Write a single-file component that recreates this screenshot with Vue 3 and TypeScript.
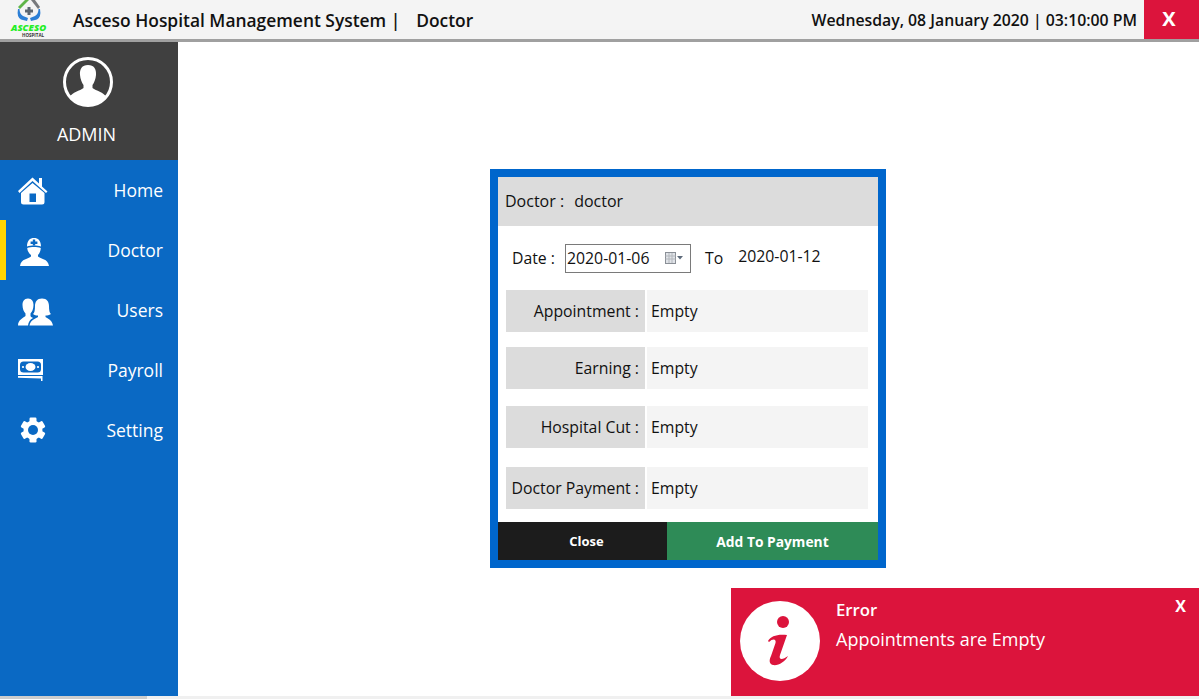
<script setup lang="ts">
interface NavItem { label: string; icon: string; active?: boolean }
const nav: NavItem[] = [
  { label: 'Home', icon: 'home' },
  { label: 'Doctor', icon: 'doctor', active: true },
  { label: 'Users', icon: 'users' },
  { label: 'Payroll', icon: 'payroll' },
  { label: 'Setting', icon: 'setting' },
]
const rows = [
  { label: 'Appointment :', cls: 'r1' },
  { label: 'Earning :', cls: 'r2' },
  { label: 'Hospital Cut :', cls: 'r3' },
  { label: 'Doctor Payment :', cls: 'r4' },
]
const gearAngles = [0, 60, 120, 180, 240, 300]
</script>

<template>
  <div class="page">
    <header class="topbar">
      <svg class="logo" width="42" height="24" viewBox="0 0 42 24">
        <path d="M10 7 L17 0 L21 0 L12 9 Z" fill="#5fb548" />
        <path d="M23 0 L27 0 L32 7 L30 9 Z" fill="#77797c" />
        <path d="M10 9 Q8.500 17 13 19.500 L19 21 L20 18 L15 16 Q11.500 14 11.500 9 Z" fill="#2c7fd6" />
        <path d="M32 9 Q33.500 17 29 19.500 L23 21 L22 18 L27 16 Q30.500 14 30.500 9 Z" fill="#2c7fd6" />
        <path d="M19.500 7 h3 v2.500 h2.500 v3 h-2.500 v2.500 h-3 v-2.500 h-2.500 v-3 h2.500 Z" fill="#5c6670" />
      </svg>
      <span class="logo-word">ASCESO</span>
      <span class="logo-sub">HOSPITAL</span>
      <div class="title">Asceso Hospital Management System |<span class="title-page">Doctor</span></div>
      <div class="clock">Wednesday, 08 January 2020 | 03:10:00 PM</div>
      <div class="close-app">X</div>
    </header>

    <div class="body">
      <aside class="sidebar">
        <div class="profile">
          <svg width="50" height="50" viewBox="0 0 50 50">
            <circle cx="25" cy="25" r="23.500" fill="none" stroke="#fff" stroke-width="3" />
            <path d="M25 8 C31 8 33.500 12 33 18 C32.700 22 31 26 29.500 28 L29.500 31 C33 34 41 35 43 40 C38 45 32 47.500 25 47.500 C18 47.500 12 45 7 40 C9 35 17 34 20.500 31 L20.500 28 C19 26 17.300 22 17 18 C16.500 12 19 8 25 8 Z" fill="#fff" />
          </svg>
          <div class="admin">ADMIN</div>
        </div>
        <nav class="nav">
          <div v-for="item in nav" :key="item.label" class="nav-item" :class="{ active: item.active }">
            <div class="nav-icon" :class="'ic-' + item.icon">
              <svg v-if="item.icon === 'home'" width="30" height="28" viewBox="0 0 30 28">
                <path d="M0 14 L14.500 0.500 L21 6.500 L21 1 L24 1 L24 9.500 L29.500 14.500 L28 16 L14.500 4 L1.500 16 Z" fill="#fff" />
                <path d="M3 16 L14.500 6 L26.500 16 L26.500 25 Q26.500 27.500 24 27.500 L5.500 27.500 Q3 27.500 3 25 Z M11.500 16.500 L11.500 25 L18 25 L18 16.500 Z" fill="#fff" fill-rule="evenodd" />
              </svg>
              <svg v-else-if="item.icon === 'doctor'" width="29" height="28" viewBox="0 0 29 28">
                <path d="M7 8.500 C7 2.500 10 0 14 0 C18 0 21 2.500 21 8.500 C17 7.300 11 7.300 7 8.500 Z M12.800 1.500 V3.600 H10.600 V6 H12.800 V7.800 H15.200 V6 H17.400 V3.600 H15.200 V1.500 Z" fill="#fff" fill-rule="evenodd" />
                <path d="M7.200 10 C11 8.800 17 8.800 20.800 10 C20.600 13 19.500 15.500 18 17 L18 18.500 C20.500 21 28 20.500 29 28 L0 28 C1 20.500 8.500 21 11 18.500 L11 17 C9 15.500 7.400 13 7.200 10 Z" fill="#fff" />
              </svg>
              <svg v-else-if="item.icon === 'users'" width="35" height="28" viewBox="0 0 35 28">
                <path d="M10 0.500 C14 0.500 15.500 3.500 15.500 7 C15.500 11 14 14 12.500 15.500 L12.500 18 C13 19 14 19.500 15 20 C12 21.500 10.500 24 10 27.500 L0 27.500 C0 22 5 20 7.500 18 L7.500 15.500 C6 14 4.500 11 4.500 7 C4.500 3.500 6 0.500 10 0.500 Z" fill="#fff" />
                <path d="M24 0.500 C29 0.500 31 4 31 8 C31 12 31.500 15 33 16 C31 17 29.500 17.500 27.500 17.500 L27.500 19 C29 20.500 34 21.500 35 27.500 L11.500 27.500 C12.500 21.500 18.500 20.500 20 19 L20 17.500 C18 17.500 16.500 17 15 16 C16.500 15 17 12 17 8 C17 4 19 0.500 24 0.500 Z" fill="#fff" />
              </svg>
              <svg v-else-if="item.icon === 'payroll'" width="26" height="22" viewBox="0 0 26 22">
                <rect x="0" y="0" width="25" height="16" fill="#fff" />
                <rect x="2" y="2.500" width="21" height="11" rx="3.500" fill="#0a69c4" />
                <ellipse cx="12.500" cy="8" rx="5" ry="4" fill="#fff" />
                <circle cx="5" cy="8" r="1.100" fill="#fff" />
                <circle cx="20" cy="8" r="1.100" fill="#fff" />
                <path d="M0 17 H24.500 V22 H23 V19.500 L0 18.800 Z" fill="#fff" />
              </svg>
              <svg v-else width="26" height="26" viewBox="0 0 26 26">
                <circle cx="13" cy="13" r="9.500" fill="#fff" />
                <rect v-for="a in gearAngles" :key="a" x="9.500" y="0.500" width="7" height="6" rx="1.200" fill="#fff" :transform="`rotate(${a} 13 13)`" />
                <circle cx="13" cy="13" r="5" fill="#0a69c4" />
              </svg>
            </div>
            <span class="nav-label">{{ item.label }}</span>
          </div>
        </nav>
      </aside>

      <main class="content">
        <section class="modal">
          <div class="modal-head"><span>Doctor :</span><span class="doc-name">doctor</span></div>
          <div class="date-row">
            <span class="date-label">Date :</span>
            <div class="date-box">
              <span>2020-01-06</span>
              <svg width="20" height="14" viewBox="0 0 20 14">
                <rect x="1.500" y="1.500" width="10" height="11" fill="#e0e3e8" stroke="#8a8f96" />
                <path d="M1.500 5 H11.500 M1.500 8 H11.500 M5 2 V12 M8 2 V12" stroke="#b4b8bd" stroke-width="1" />
                <path d="M13 5 H19 L16 8.500 Z" fill="#5d6a7a" />
              </svg>
            </div>
            <span class="to">To</span>
            <span class="to-date">2020-01-12</span>
          </div>
          <div class="rows">
            <div v-for="row in rows" :key="row.label" class="row" :class="row.cls">
              <div class="row-label">{{ row.label }}</div>
              <div class="row-value">Empty</div>
            </div>
          </div>
          <div class="modal-foot">
            <div class="btn btn-close">Close</div>
            <div class="btn btn-add">Add To Payment</div>
          </div>
        </section>

        <div class="toast">
          <svg class="toast-icon" width="80" height="80" viewBox="0 0 80 80">
            <circle cx="40" cy="40" r="40" fill="#fff" />
            <circle cx="43" cy="21" r="6" fill="#dc143c" />
            <path d="M28 40 C31 35 37 33 47 34 L40 54 C38.500 58.500 42 59.500 48 55 C45 61 38 65 33 64 C29 63 29 59 31 55 L35.500 42 C36.500 38 33 37 29 41 Z" fill="#dc143c" />
          </svg>
          <div class="toast-text">
            <div class="toast-title">Error</div>
            <div class="toast-msg">Appointments are Empty</div>
          </div>
          <div class="toast-x">X</div>
        </div>
      </main>
    </div>
    <div class="hscroll"><div class="hthumb"></div></div>
  </div>
</template>

<style>
html, body { margin: 0; padding: 0; overflow: hidden; background: #fff; }
</style>

<style scoped>
.page {
  width: 1199px;
  height: 699px;
  display: flex;
  flex-direction: column;
  overflow: hidden;
  font-family: "Open Sans", "Noto Sans", sans-serif;
  color: #111;
  background: #fff;
}
.topbar {
  position: relative;
  flex: none;
  height: 39px;
  display: flex;
  align-items: center;
  background: #f4f4f4;
  border-bottom: 3px solid #a0a0a0;
}
.logo { position: absolute; left: 8px; top: 0; }
.logo-word {
  position: absolute; left: 11px; top: 24px;
  font: italic 800 9.500px/8px "Open Sans", sans-serif;
  color: #22ee22;
}
.logo-sub {
  position: absolute; left: 22px; top: 33px;
  font: 700 4.500px/4px "Open Sans", sans-serif;
  color: #333;
}
.title {
  margin-left: 73px;
  font-size: 17.400px;
  font-weight: 600;
  white-space: nowrap;
}
.title-page { margin-left: 16px; }
.clock {
  margin-left: auto;
  margin-right: 7px;
  font-size: 15.800px;
  font-weight: 600;
  white-space: nowrap;
}
.close-app {
  width: 55px;
  height: 100%;
  box-sizing: border-box;
  padding: 0 5px 2px 0;
  display: flex;
  align-items: center;
  justify-content: center;
  background: #dc143c;
  color: #fff;
  font-size: 20px;
  font-weight: 700;
}
.body { flex: 1; display: flex; min-height: 0; }
.sidebar {
  flex: none;
  width: 178px;
  display: flex;
  flex-direction: column;
  background: #0a69c4;
  color: #fff;
}
.profile {
  height: 118px;
  box-sizing: border-box;
  padding-top: 15px;
  display: flex;
  flex-direction: column;
  align-items: center;
  background: #404040;
}
.profile svg { margin-left: -3px; }
.admin { margin-top: 15px; font-size: 18px; line-height: 24px; margin-left: -5px; }
.nav-item {
  position: relative;
  height: 60px;
  display: flex;
  align-items: center;
  justify-content: space-between;
  padding: 0 15px 0 18px;
}
.nav-item.active::before {
  content: "";
  position: absolute;
  left: 0; top: 0; bottom: 0;
  width: 6px;
  background: #ffd400;
}
.nav-icon { display: flex; }
.ic-home { margin-top: 2px; }
.ic-doctor { margin: 4px 0 0 2px; }
.ic-users { margin-top: 3px; }
.ic-payroll { margin-top: 0; }
.ic-setting { margin-left: 2px; }
.nav-label { font-size: 17.500px; }
.content { position: relative; flex: 1; display: flex; }
.modal {
  margin: 127px 0 0 312px;
  width: 380px;
  height: 383px;
  border: 8px solid #0066cc;
  display: flex;
  flex-direction: column;
  color: #111;
}
.modal-head {
  height: 49px;
  flex: none;
  box-sizing: border-box;
  padding: 0 7px 2px;
  display: flex;
  align-items: center;
  background: #dcdcdc;
  font-size: 16px;
}
.doc-name { margin-left: 10px; }
.date-row {
  height: 64px;
  flex: none;
  display: flex;
  align-items: center;
  font-size: 15.800px;
  padding-left: 14px;
}
.date-box {
  margin-left: 10px;
  width: 126px;
  height: 29px;
  box-sizing: border-box;
  border: 1px solid #7a7a7a;
  display: flex;
  align-items: center;
  justify-content: space-between;
  padding: 0 6px 0 1px;
}
.to { margin-left: 14px; }
.to-date { margin-left: 15px; margin-top: -4px; font-size: 15.800px; }
.rows { flex: 1; position: relative; }
.row {
  display: flex;
  height: 42px;
  margin: 0 10px 0 8px;
  font-size: 15.800px;
}
.r2 { margin-top: 15px; }
.r3 { margin-top: 17px; }
.r4 { margin-top: 19px; }
.row-label {
  width: 139px;
  background: #dcdcdc;
  display: flex;
  align-items: center;
  justify-content: flex-end;
  padding-right: 6px;
  box-sizing: border-box;
  white-space: nowrap;
}
.row-value {
  flex: 1;
  margin-left: 2px;
  background: #f4f4f4;
  display: flex;
  align-items: center;
  padding-left: 4px;
}
.modal-foot { flex: none; height: 38px; display: flex; }
.btn {
  display: flex;
  align-items: center;
  justify-content: center;
  color: #fff;
  font-weight: 700;
}
.btn-close { width: 169px; box-sizing: border-box; padding-left: 8px; background: #1c1c1c; font-size: 13px; }
.btn-add { flex: 1; background: #2e8b57; font-size: 13.800px; }
.toast {
  position: absolute;
  right: 0;
  top: 546px;
  width: 468px;
  height: 108px;
  background: #dc143c;
  color: #fff;
  display: flex;
}
.toast-icon { margin: 13px 0 0 9px; flex: none; }
.toast-text { margin-left: 16px; padding-top: 10px; }
.toast-title { font-size: 16.800px; font-weight: 600; line-height: 24px; }
.toast-msg { font-size: 18px; line-height: 24px; margin-top: 5px; }
.toast-x {
  position: absolute;
  top: 7px;
  right: 13px;
  font-size: 16px;
  font-weight: 700;
}
.hscroll { flex: none; height: 3px; background: #f0f0f0; }
.hthumb { width: 147px; height: 100%; background: #cdcdcd; }
</style>
